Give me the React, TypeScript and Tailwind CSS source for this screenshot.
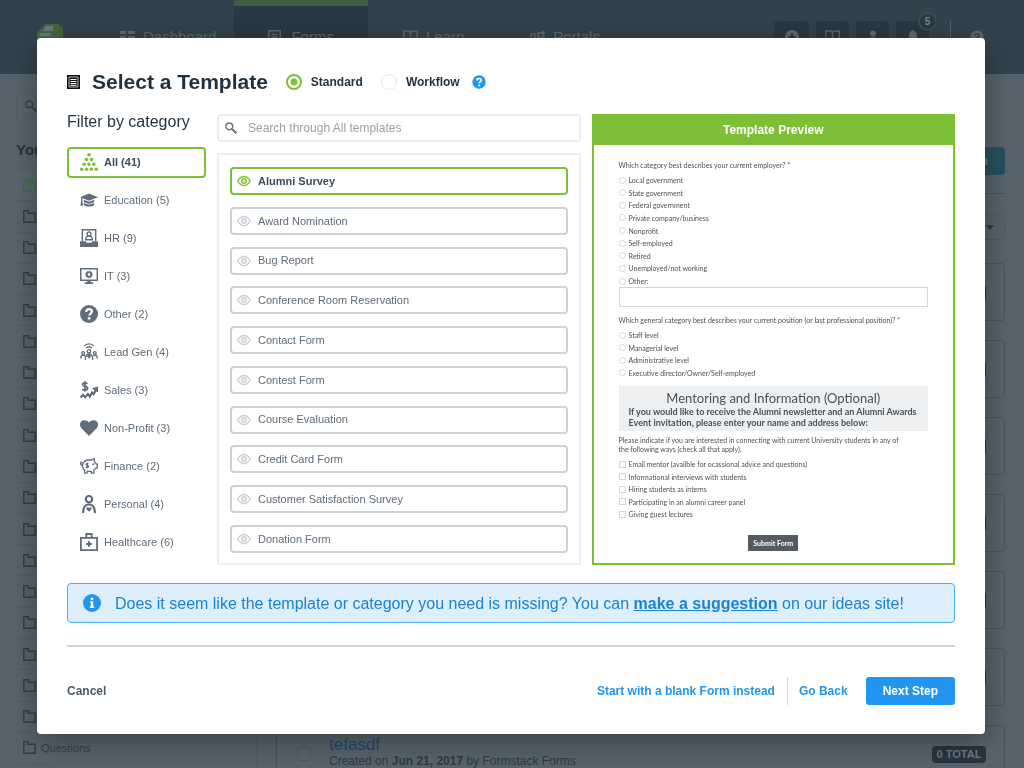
import { useState, type ReactNode } from "react";

type Category = { name: string; count: number; icon: ReactNode };

const categories: Category[] = [
  {
    name: "All",
    count: 41,
    icon: (
      <g fill="currentColor">
        <circle cx="9" cy="1.8" r="1.8" />
        <circle cx="6.500" cy="6.500" r="1.800" />
        <circle cx="11.500" cy="6.500" r="1.800" />
        <circle cx="4.200" cy="11.300" r="1.800" />
        <circle cx="9" cy="11.300" r="1.800" />
        <circle cx="13.800" cy="11.300" r="1.800" />
        <circle cx="1.800" cy="16.200" r="1.800" />
        <circle cx="6.600" cy="16.200" r="1.800" />
        <circle cx="11.400" cy="16.200" r="1.800" />
        <circle cx="16.200" cy="16.200" r="1.800" />
      </g>
    ),
  },
  {
    name: "Education",
    count: 5,
    icon: (
      <g fill="currentColor">
        <path d="M9 2.500 18 6.200 9 9.800 0 6.200Z" />
        <path d="M3.800 8.700 9 10.800l5.200-2.100v2.400L9 13 3.800 11.100Z" />
        <path d="M3.800 12 9 13.800l5.200-1.800v2c-1.200 1-3 1.500-5.200 1.500s-4-.5-5.200-1.500Z" />
        <path d="M1.100 7h1.300v3.500l.7 4.300H.4l.7-4.300Z" />
      </g>
    ),
  },
  {
    name: "HR",
    count: 9,
    icon: (
      <>
        <path d="M2.300 12V.7h13.400V12" fill="none" stroke="currentColor" strokeWidth="1.400" />
        <circle cx="9" cy="4.900" r="1.900" fill="none" stroke="currentColor" strokeWidth="1.400" />
        <path d="M5.600 10.800c.1-2.400 1.300-3.700 3.400-3.700s3.300 1.300 3.400 3.700Z" fill="none" stroke="currentColor" strokeWidth="1.400" />
        <path d="M0 12.200h5.500l1.200 1.500h4.600l1.200-1.500H18V18H0Z" fill="currentColor" />
      </>
    ),
  },
  {
    name: "IT",
    count: 3,
    icon: (
      <>
        <path d="M.7 1.700h16.600v11.600H.7Z" fill="none" stroke="currentColor" strokeWidth="1.500" />
        <circle cx="9" cy="7.500" r="2.300" fill="none" stroke="currentColor" strokeWidth="1.800" />
        <circle cx="9" cy="7.500" r="3.300" fill="none" stroke="currentColor" strokeWidth="1" strokeDasharray="1.200 1.400" />
        <path d="M7.300 13.300h3.400v1.900h2.500v1.700H4.800v-1.700h2.500Z" fill="currentColor" />
      </>
    ),
  },
  {
    name: "Other",
    count: 2,
    icon: (
      <>
        <circle cx="9" cy="9" r="9" fill="currentColor" />
        <path d="M6.200 7c0-1.800 1.200-2.800 2.900-2.800s2.800 1 2.800 2.400c0 1.900-2.600 2-2.600 4" fill="none" stroke="#fff" strokeWidth="2.200" />
        <circle cx="9.200" cy="13.300" r="1.400" fill="#fff" />
      </>
    ),
  },
  {
    name: "Lead Gen",
    count: 4,
    icon: (
      <g fill="none" stroke="currentColor" strokeWidth="1.300" strokeLinecap="round">
        <path d="M4.700 2.500C7.200.7 10.800.7 13.300 2.500M6.500 4.600c1.500-1 3.500-1 5 0" />
        <circle cx="9" cy="8.300" r="1.700" />
        <path d="M5.300 16.500c0-3.800 1.500-5.500 3.700-5.500s3.700 1.700 3.700 5.500M9 11l-1.200 2.500L9 15l1.200-1.500Z" />
        <circle cx="3.200" cy="10" r="1.400" />
        <circle cx="14.800" cy="10" r="1.400" />
        <path d="M.8 15c0-2 .8-2.800 2.400-2.800.6 0 1.100.2 1.500.5M17.200 15c0-2-.8-2.800-2.400-2.800-.6 0-1.100.2-1.500.5" />
      </g>
    ),
  },
  {
    name: "Sales",
    count: 3,
    icon: (
      <>
        <path d="M7.300 2.800C6.700 2 5.900 1.800 4.900 1.800 3.500 1.800 2.600 2.500 2.600 3.500c0 2.400 5 1.200 5 3.800 0 1.200-1.100 1.800-2.600 1.800-1.200 0-2.100-.4-2.700-1.200M5 .3v10.300" fill="none" stroke="currentColor" strokeWidth="1.700" />
        <path d="M.5 16.500 3 13.800l2.200 2.400 2.700-3.200 1.900 2.600 2.200-4 1.500 1.600 2.600-4.500" fill="none" stroke="currentColor" strokeWidth="2.100" />
        <path d="M11.800 7.200 18 5.600v6Z" fill="currentColor" />
      </>
    ),
  },
  {
    name: "Non-Profit",
    count: 3,
    icon: <path d="M9 17 1.400 9.200C-.5 7.100-.4 4.200 1.200 2.600 3.300.6 6.900.9 9 3.500c2.100-2.600 5.700-2.900 7.800-.9 1.600 1.600 1.700 4.500-.2 6.600Z" fill="currentColor" />,
  },
  {
    name: "Finance",
    count: 2,
    icon: (
      <g fill="none" stroke="currentColor" strokeWidth="1.300" strokeLinejoin="round">
        <path d="M3 6.500C4.500 3.500 7.500 2.600 11 3.200l3.300-1.700v3c1 .8 1.500 1.700 1.900 2.500h1.100v4h-1.400c-.5 1-1.200 1.600-2 2.100v3h-2.600v-1.700H7.200v1.700H4.600v-3C2.800 11.700 2 9 3 6.500Z" />
        <path d="M2.700 8.500C1 8.500.4 7.200.7 6M.4 4.800l2 1.500" />
        <path d="M8.600 6.900c-.9-.8-2.700-.5-2.700.6 0 1.300 2.800.7 2.800 2 0 1.100-1.900 1.300-2.900.5M7.300 5.500V11.300" strokeWidth="1.100" />
        <circle cx="13.300" cy="7.300" r=".4" />
      </g>
    ),
  },
  {
    name: "Personal",
    count: 4,
    icon: (
      <>
        <circle cx="9" cy="4.200" r="3.200" fill="none" stroke="currentColor" strokeWidth="2.200" />
        <path d="M3.100 18c0-5.800 1.800-8.500 5.900-8.500s5.900 2.700 5.900 8.500" fill="none" stroke="currentColor" strokeWidth="2.200" />
        <path d="m9 16.700-2.300-2.300c-1.200-1.600 1.200-3 2.300-1.200 1.100-1.800 3.500-.4 2.300 1.200Z" fill="currentColor" />
      </>
    ),
  },
  {
    name: "Healthcare",
    count: 6,
    icon: (
      <>
        <path d="M.9 4.800h16.200v12.300H.9ZM6.300 4.500V1h5.400v3.500" fill="none" stroke="currentColor" strokeWidth="1.800" />
        <path d="M9 8.200v5.600M6.200 11h5.600" stroke="currentColor" strokeWidth="2.100" />
      </>
    ),
  },
];

const templates = [
  "Alumni Survey",
  "Award Nomination",
  "Bug Report",
  "Conference Room Reservation",
  "Contact Form",
  "Contest Form",
  "Course Evaluation",
  "Credit Card Form",
  "Customer Satisfaction Survey",
  "Donation Form",
];

const employers = [
  "Local government",
  "State government",
  "Federal government",
  "Private company/business",
  "Nonprofit",
  "Self-employed",
  "Retired",
  "Unemployed/not working",
  "Other:",
];

const positions = [
  "Staff level",
  "Managerial level",
  "Administrative level",
  "Executive director/Owner/Self-employed",
];

const interests = [
  "Email mentor (availble for ocassional advice and questions)",
  "Informational interviews with students",
  "Hiring students as interns",
  "Participating in an alumni career panel",
  "Giving guest lectures",
];

const folders = Array.from({ length: 19 }, (_, i) => (i === 18 ? "Questions" : ""));

function SearchIcon({ className }: { className: string }) {
  return (
    <svg viewBox="0 0 12 12" className={className} fill="none" stroke="currentColor">
      <circle cx="4.300" cy="4.300" r="3.400" strokeWidth="1.500" />
      <path d="m7 7 4.300 4.300" strokeWidth="2" />
    </svg>
  );
}

function EyeIcon() {
  return (
    <svg viewBox="0 0 14 12" className="h-3 w-3.5 shrink-0" fill="none" stroke="currentColor">
      <path d="M.8 6C3.900-.1 10.100-.1 13.200 6 10.100 12.100 3.900 12.100.8 6Z" strokeWidth="1.500" />
      <circle cx="7" cy="6" r="2.300" strokeWidth="1.400" />
      <circle cx="7" cy="6" r=".7" fill="currentColor" stroke="none" />
    </svg>
  );
}

function BookIcon() {
  return (
    <svg viewBox="0 0 15 14" className="h-3.5 w-[15px]" fill="none" stroke="currentColor" strokeWidth="1.400">
      <path d="M7.500 2.200 5.500 1H.8v11h4.700l2 1.200 2-1.200h4.700V1H9.500Zm0 0v11" />
    </svg>
  );
}

function FolderIcon({ active }: { active: boolean }) {
  return (
    <svg viewBox="0 0 13 13" className="size-[13px] shrink-0" fill="none" stroke="currentColor" strokeWidth="1.500">
      <path d="M.8 12.200V.8h4.500v2.500h6.900v8.900Z" />
      {active && <path d="M5 6.300c.2-1.500 3-1.500 2.900 0C7.800 7.300 6.500 7.300 6.500 8.500M6.500 9.500v1" strokeWidth="1" />}
    </svg>
  );
}

function TopBar() {
  return (
    <header className="flex h-[74px] bg-[#33424d] text-[15px] text-[#5b6974]">
      <svg viewBox="0 0 27 27" className="mt-[23px] ml-9 h-[27px] w-[27px]">
        <path d="M19 1v26h8V4h-3V2Z" fill="#4a6235" />
        <path d="M9 1h13v26H1V10Z" fill="#3f6a3f" />
        <path d="M10 3h7v5H7Z" fill="#69777c" />
        <path d="M5 10h10v3H3Z" fill="#69777c" />
      </svg>
      <nav className="flex">
        <a href="#dashboard" className="flex items-center gap-2 pr-[18px] pl-[57px]">
          <svg viewBox="0 0 15 12" className="h-3 w-[15px]" fill="currentColor">
            <path d="M0 0h6v3H0ZM8 0h7v3H8ZM0 5h6v3H0ZM8 5h7v3H8Z" />
          </svg>
          Dashboard
        </a>
        <a href="#forms" className="flex items-center gap-2.5 border-t-[6px] border-[#3c5f3f] bg-[#293843] px-[34px] pb-1.5">
          <svg viewBox="0 0 13 14" className="h-3.5 w-[13px]" fill="none" stroke="currentColor" strokeWidth="1.500">
            <path d="M.8.800h11.400v12.400H.8ZM3.500 4.500h6M3.500 7h6M3.500 9.500h6" />
          </svg>
          Forms
        </a>
        <a href="#learn" className="flex items-center gap-2 pl-[35px]">
          <BookIcon />
          Learn
        </a>
        <a href="#portals" className="flex items-center gap-2 pl-[66px]">
          <svg viewBox="0 0 15 13" className="h-[13px] w-[15px]" fill="none" stroke="currentColor" strokeWidth="1.500">
            <path d="M1 3h4v6H1ZM8 12V2h4M8 7h4" />
            <circle cx="13" cy="2" r="1.200" />
            <circle cx="13" cy="7" r="1.200" />
          </svg>
          Portals
        </a>
      </nav>
      <div className="mt-[21px] mr-10 ml-auto flex h-8 gap-[7px]">
        <button aria-label="Add" className="flex w-[35px] items-center justify-center rounded bg-[#293843]">
          <svg viewBox="0 0 14 14" className="size-3.5">
            <circle cx="7" cy="7" r="7" fill="currentColor" />
            <path d="M7 3.500v7M3.500 7h7" stroke="#293843" strokeWidth="2" />
          </svg>
        </button>
        <button aria-label="Library" className="flex w-[33px] items-center justify-center rounded bg-[#293843]">
          <BookIcon />
        </button>
        <button aria-label="Account" className="flex w-[33px] items-center justify-center rounded bg-[#293843]">
          <svg viewBox="0 0 14 14" className="size-3.5" fill="currentColor">
            <circle cx="7" cy="3.500" r="3" />
            <path d="M1.500 13c0-4 2-6 5.500-6s5.500 2 5.500 6Z" />
          </svg>
        </button>
        <button aria-label="Notifications" className="relative flex w-[33px] items-center justify-center rounded bg-[#293843]">
          <svg viewBox="0 0 14 14" className="size-3.5" fill="currentColor">
            <path d="M7 0c3 1 4 3 4 6v3l2 2H1l2-2V6c0-3 1-5 4-6Z" />
          </svg>
          <span className="absolute -top-[9px] -right-2 flex size-[19px] items-center justify-center rounded-full border-2 border-[#35503f] bg-[#2b3a45] text-[10px] font-bold text-[#7a878f]">
            5
          </span>
        </button>
        <div className="ml-3.5 w-px bg-[#53626c]" />
        <button aria-label="Help" className="ml-3 flex items-center">
          <svg viewBox="0 0 14 14" className="size-3.5">
            <circle cx="7" cy="7" r="6.500" fill="currentColor" />
            <path d="M4.500 5.500C5 3 9.500 3 9.300 5.500 9.200 7 7 7 7 9" fill="none" stroke="#33424d" strokeWidth="1.500" />
          </svg>
        </button>
      </div>
    </header>
  );
}

function FormsPage() {
  return (
    <div className="h-screen overflow-hidden bg-[#57646d]">
      <TopBar />
      <div className="flex">
        <aside className="w-[258px] shrink-0 border-r border-[#4a5861] pl-4">
          <div className="mt-[19px] flex h-[26px] items-center border border-[#515f68] pl-2 text-[#35434d]">
            <SearchIcon className="size-3" />
          </div>
          <h2 className="mt-[21px] text-[15px] leading-5 font-bold text-[#26343f]">Your Folders</h2>
          <ul className="mt-2.5 flex h-[594px] flex-col text-[11px] text-[#33414b]">
            {folders.map((name, i) => (
              <li
                key={i}
                className={`flex flex-1 items-center gap-[5px] border-b border-[#505e67] pl-[7px] ${
                  i === 0 ? "bg-[#5a676f] text-[#437041]" : ""
                }`}
              >
                <FolderIcon active={i === 0} />
                {name}
              </li>
            ))}
          </ul>
        </aside>
        <main className="ml-[18px] flex-1 pr-[19px]">
          <div className="mt-[73px] flex justify-end border-b border-[#48555e] pb-[18px]">
            <button className="h-7 rounded bg-[#265060] px-[17px] text-xs font-bold text-[#66808b]">New Form</button>
          </div>
          <div className="mt-5 ml-auto flex h-[26px] w-40 items-center justify-end rounded-sm border border-[#4e5c65] pr-2.5">
            <svg viewBox="0 0 8 5" className="h-[5px] w-2">
              <path d="M0 0h8L4 5Z" fill="#2e3b45" />
            </svg>
          </div>
          <div className="mt-[23px] flex flex-col gap-[19px]">
            {folders.slice(0, 7).map((_, i) => (
              <div key={i} className="flex h-[58px] items-center rounded border border-[#48555e] pr-[18px] pl-5">
                {i === 6 && (
                  <>
                    <input type="checkbox" aria-label="Select tefasdf" className="size-3.5 appearance-none rounded-sm border border-[#4c5962]" />
                    <div className="ml-[18px] pb-1 text-[#2d3b45]">
                      <h3 className="text-[17px] leading-[18px] text-[#1c4b73]">tefasdf</h3>
                      <p className="text-xs leading-[14px]">
                        Created on <b>Jun 21, 2017</b> by Formstack Forms
                      </p>
                    </div>
                  </>
                )}
                <span className="ml-auto w-[54px] rounded-sm bg-[#273641] text-center text-[11px] leading-[17px] font-bold text-[#6d7a83]">
                  {i === 6 ? "0 TOTAL" : "\u00a0"}
                </span>
              </div>
            ))}
          </div>
        </main>
      </div>
    </div>
  );
}

type ChoicesProps = { type: "radio" | "checkbox"; group: string; items: string[]; className: string };

function Choices({ type, group, items, className }: ChoicesProps) {
  return (
    <div className={`flex flex-col justify-between ${className}`}>
      {items.map((label) => (
        <label key={label} className="flex h-2.5 items-center gap-[3px] text-[7px] leading-[10px]">
          <input
            type={type}
            name={group}
            className={`size-[7px] shrink-0 appearance-none border border-[#d3d7dc] ${type === "radio" ? "rounded-full" : ""}`}
          />
          {label}
        </label>
      ))}
    </div>
  );
}

function TemplatePreview() {
  return (
    <section className="flex flex-col border-2 border-[#7dc036]">
      <h3 className="bg-[#7dc036] pb-px text-center text-xs leading-7 font-bold text-white">Template Preview</h3>
      <form className="flex flex-1 flex-col px-[25px] pt-[15px] font-['Lato',sans-serif] text-[#4b5157]">
        <p className="text-[7px] leading-[10px]">Which category best describes your current employer? *</p>
        <Choices type="radio" group="employer" items={employers} className="mt-[5px] h-[111px]" />
        <input aria-label="Other employer" className="mt-px h-5 border border-[#d3d7dc]" />
        <p className="mt-2 text-[7px] leading-[10px]">
          Which general category best describes your current position (or last professional position)? *
        </p>
        <Choices type="radio" group="position" items={positions} className="mt-[5px] h-12" />
        <div className="mt-2 bg-[#eeeff1] px-2.5 pt-1 pb-[3px]">
          <h4 className="text-center text-[13px] leading-4">Mentoring and Information (Optional)</h4>
          <p className="text-[9px] leading-[11px] font-bold">
            If you would like to receive the Alumni newsletter and an Alumni Awards Event invitation, please enter your name and address below:
          </p>
        </div>
        <p className="mt-[5px] pr-5 text-[7px] leading-[9px]">
          Please indicate if you are interested in connecting with current University students in any of the following ways (check all that apply).
        </p>
        <Choices type="checkbox" group="interest" items={interests} className="mt-[5px] h-[60px]" />
        <button type="button" className="mt-4 h-4 w-[50px] self-center bg-[#555b61] text-[7px] font-bold text-white">
          Submit Form
        </button>
      </form>
    </section>
  );
}

function TemplateDialog() {
  const [category, setCategory] = useState("All");
  const [template, setTemplate] = useState("Alumni Survey");
  const [kind, setKind] = useState("Standard");

  return (
    <div
      role="dialog"
      aria-labelledby="dialog-title"
      className="mt-[38px] mr-[39px] ml-[37px] rounded bg-white px-[30px] pt-[30px] pb-[29px] shadow-[0_8px_30px_rgba(0,0,0,0.35)]"
    >
      <div className="flex h-7 items-center">
        <svg viewBox="0 0 13 14" className="h-3.5 w-[13px]">
          <path d="M0 0h13v14H0Z" fill="#111" />
          <path d="M2 2h9v10H2Z" fill="none" stroke="#fff" strokeWidth=".7" />
          <path d="M3.500 4.500h6M3.500 6.500h6M3.500 8.500h6M3.500 10.300h6" stroke="#fff" strokeWidth="1" />
        </svg>
        <h1 id="dialog-title" className="ml-3 text-[21px] leading-7 font-bold text-[#1f303e]">
          Select a Template
        </h1>
        {["Standard", "Workflow"].map((name) => (
          <label key={name} className="ml-[18px] flex items-center gap-[9px] text-xs font-bold text-[#26343f]">
            <input
              type="radio"
              name="kind"
              checked={kind === name}
              onChange={() => setKind(name)}
              className="size-4 appearance-none rounded-full border border-[#e4e6e8] checked:border-2 checked:border-[#7dc036] checked:bg-[radial-gradient(circle,#7dc036_3px,transparent_4px)]"
            />
            {name}
          </label>
        ))}
        <button aria-label="Help" className="ml-3">
          <svg viewBox="0 0 14 14" className="size-3.5">
            <circle cx="7" cy="7" r="6.700" fill="#2196f0" />
            <path d="M4.900 5.500c0-1.300.9-2 2.200-2s2.100.7 2.100 1.800C9.200 6.800 7.200 6.800 7.200 8.500" fill="none" stroke="#fff" strokeWidth="1.700" />
            <circle cx="7.100" cy="10.500" r="1" fill="#fff" />
          </svg>
        </button>
      </div>

      <div className="mt-[18px] grid min-h-[451px] grid-cols-[139px_1fr_1fr] gap-[11px]">
        <div>
          <h2 className="text-base leading-4 text-[#1f303e]">Filter by category</h2>
          <ul className="mt-[17px] flex flex-col gap-[7px]">
            {categories.map((c) => (
              <li key={c.name}>
                <button
                  onClick={() => setCategory(c.name)}
                  className={`flex h-[31px] w-full items-center gap-1.5 rounded border-2 pb-px pl-[11px] text-[11px] ${
                    category === c.name ? "border-[#7dc036] font-bold text-[#3f4d59]" : "border-transparent text-[#5f6c79]"
                  }`}
                >
                  <svg viewBox="0 0 18 18" className={`size-[18px] shrink-0 ${category === c.name ? "text-[#7dc036]" : ""}`}>
                    {c.icon}
                  </svg>
                  {c.name} ({c.count})
                </button>
              </li>
            ))}
          </ul>
        </div>

        <div className="flex flex-col">
          <label className="flex h-7 items-center gap-[11px] rounded-sm border-2 border-[#eceeef] pl-1.5 text-[#66727d]">
            <SearchIcon className="size-3 shrink-0" />
            <input
              aria-label="Search templates"
              placeholder={`Search through ${category} templates`}
              className="w-full text-xs outline-none placeholder:text-[#9aa1a8]"
            />
          </label>
          <ul className="mt-[11px] flex flex-1 flex-col justify-between border-2 border-[#eceeef] px-[11px] pt-3 pb-2.5">
            {templates.map((name) => (
              <li key={name}>
                <button
                  onClick={() => setTemplate(name)}
                  className={`flex h-7 w-full items-center gap-[7px] rounded border-2 pl-[5px] text-[11px] ${
                    template === name ? "border-[#7dc036] font-bold text-[#3f4d59]" : "border-[#cbd1d6] text-[#5f6c79]"
                  }`}
                >
                  <span className={template === name ? "text-[#7dc036]" : "text-[#cbd1d6]"}>
                    <EyeIcon />
                  </span>
                  {name}
                </button>
              </li>
            ))}
          </ul>
        </div>

        <TemplatePreview />
      </div>

      <div className="mt-[18px] flex h-10 items-center gap-3.5 rounded border border-[#4aaef5] bg-[#ddeefc] pl-[15px] text-[#1a82d2]">
        <svg viewBox="0 0 18 18" className="size-[18px] shrink-0">
          <circle cx="9" cy="9" r="9" fill="#2196f0" />
          <circle cx="9" cy="4.800" r="1.400" fill="#fff" />
          <path d="M7 7.300h3.200v5.200h1V14H6.800v-1.500h1V8.700H7Z" fill="#fff" />
        </svg>
        <p className="pt-0.5 text-base">
          Does it seem like the template or category you need is missing? You can{" "}
          <a href="#ideas" className="font-bold underline">
            make a suggestion
          </a>{" "}
          on our ideas site!
        </p>
      </div>

      <div className="mt-[22px] border-t-2 border-[#cdd3d8] pt-[30px]">
        <div className="flex h-7 items-center text-xs font-bold text-[#2196f0]">
          <button className="text-[#4c5a65]">Cancel</button>
          <button className="mr-3 ml-auto">Start with a blank Form instead</button>
          <button className="h-full border-l border-[#d5d9dd] pl-[11px]">Go Back</button>
          <button className="ml-[18px] h-full rounded-[3px] bg-[#2196f0] px-[17px] text-white">Next Step</button>
        </div>
      </div>
    </div>
  );
}

export default function App() {
  return (
    <div className="font-['Liberation_Sans',Arial,sans-serif]">
      <FormsPage />
      <div className="fixed inset-0">
        <TemplateDialog />
      </div>
    </div>
  );
}
